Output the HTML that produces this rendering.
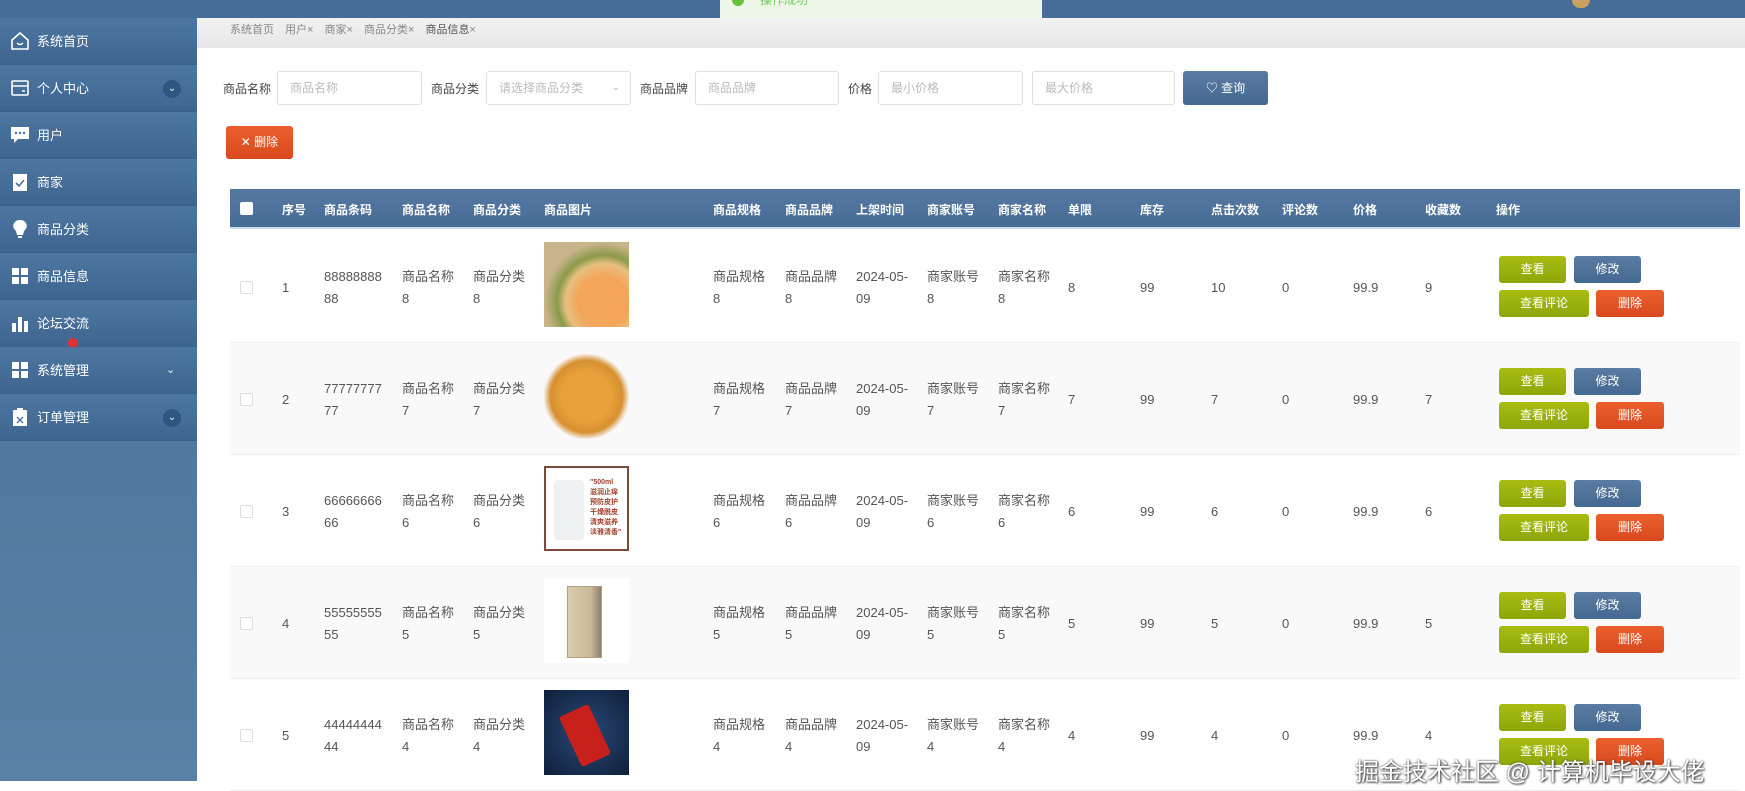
<!DOCTYPE html>
<html><head><meta charset="utf-8"><style>
*{margin:0;padding:0;box-sizing:border-box}
body{width:1745px;height:781px;overflow:hidden;background:#fff;font-family:"Liberation Sans","Noto Sans CJK SC",sans-serif;font-size:13px;color:#555;position:relative}
.a{position:absolute}
#top{left:0;top:0;width:1745px;height:18px;background:#466d97}
#side{left:0;top:18px;width:197px;height:763px;background:linear-gradient(#44709c,#52799f 60%,#5a80a6)}
.mi{position:absolute;left:0;width:197px;height:47px;background:linear-gradient(#4d77a0,#3e6590);color:#fff;font-size:13px;line-height:47px;padding-left:37px;border-bottom:1px solid #3a5f88}
.mi .ic{position:absolute;left:10px;top:13px;width:20px;height:20px}
.mi .ar{position:absolute;left:163px;top:15px;width:18px;height:18px;border-radius:50%;background:#2f5581;color:#cfe;font-size:10px;line-height:18px;text-align:center}
.mi .ar2{position:absolute;left:166px;top:0;color:#dfe;font-size:11px}
#crumb{left:197px;top:18px;width:1548px;height:30px;background:linear-gradient(#f2f2f2,#e6e6e6);font-size:11px;color:#888;line-height:24px;padding-left:33px;word-spacing:8px}
#toast{left:720px;top:0;width:322px;height:18px;background:#edf7e8;color:#7c6;font-size:12px;padding-left:40px;line-height:4px}
.lbl{position:absolute;top:80px;font-size:12px;color:#444}
.inp{position:absolute;top:71px;height:34px;border:1px solid #dcdfe6;border-radius:3px;background:#fff;color:#bbb;font-size:12px;line-height:32px;padding-left:12px}
.btn{position:absolute;color:#fff;text-align:center;border-radius:3px;font-size:12px}
.g{background:linear-gradient(#a8bc12,#8ea60a)}
.b{background:linear-gradient(#5a7ba3,#456892)}
.r{background:linear-gradient(#ec5f2d,#d84a1e)}
#th{left:230px;top:189px;width:1510px;height:40px;background:linear-gradient(#5579a1,#476c96);border-bottom:2px solid #c6dcef;color:#fff;font-weight:bold;font-size:12px}
#th span{position:absolute;top:12px}
.row{position:absolute;left:230px;width:1510px;height:112px;border-bottom:1px solid #eee}
.row span{position:absolute;top:35px;line-height:22px}
.row .s{top:46px}
.row .cb{position:absolute;left:10px;top:50px;width:13px;height:13px;border:1px solid #ddd;border-radius:2px;background:#fff}
.row .img{position:absolute;left:314px;top:11px;width:85px;height:85px}
.row .btn{height:27px;line-height:27px}
</style></head><body>
<div class="a" id="top"></div>
<div class="a" style="left:1572px;top:0;width:18px;height:8px;border-radius:0 0 9px 9px;background:#c9a060"></div>
<div class="a" id="toast"><span style="position:absolute;left:12px;top:-6px;width:12px;height:12px;border-radius:50%;background:#67c23a"></span><span style="position:absolute;left:40px;top:-6px;line-height:12px">操作成功</span></div>
<div class="a" id="side">
<div class="mi" style="top:0"><svg class="ic" viewBox="0 0 20 20"><path d="M2 9L10 2l8 7v9H2z" fill="none" stroke="#fff" stroke-width="1.6"/><path d="M7 12q3 3 6 0" fill="none" stroke="#fff" stroke-width="1.4"/></svg>系统首页</div>
<div class="mi" style="top:47px"><svg class="ic" viewBox="0 0 20 20"><rect x="2" y="3" width="16" height="14" rx="1" fill="none" stroke="#fff" stroke-width="1.6"/><path d="M2 8h16M12 13h3" stroke="#fff" stroke-width="1.6"/></svg>个人中心<span class="ar">⌄</span></div>
<div class="mi" style="top:94px"><svg class="ic" viewBox="0 0 20 20"><path d="M1 2h18v12H8l-4 4v-4H1z" fill="#fff"/><circle cx="6" cy="8" r="1.2" fill="#4a70a0"/><circle cx="10" cy="8" r="1.2" fill="#4a70a0"/><circle cx="14" cy="8" r="1.2" fill="#4a70a0"/></svg>用户</div>
<div class="mi" style="top:141px"><svg class="ic" viewBox="0 0 20 20"><rect x="3" y="2" width="14" height="17" fill="#fff"/><path d="M6 11l3 3 5-6" fill="none" stroke="#4a70a0" stroke-width="1.6"/></svg>商家</div>
<div class="mi" style="top:188px"><svg class="ic" viewBox="0 0 20 20"><path d="M10 1a6 6 0 0 0-4 11l1 4h6l1-4a6 6 0 0 0-4-11zM8 17h4v2H8z" fill="#fff"/></svg>商品分类</div>
<div class="mi" style="top:235px"><svg class="ic" viewBox="0 0 20 20"><path d="M2 2h7v7H2zM11 2h7v7h-7zM2 11h7v7H2zM11 11h7v7h-7z" fill="#fff"/></svg>商品信息</div>
<div class="mi" style="top:282px"><svg class="ic" viewBox="0 0 20 20"><path d="M2 10h4v9H2zM8 4h4v15H8zM14 8h4v11h-4z" fill="#fff"/></svg>论坛交流<span style="position:absolute;left:68px;top:38px;width:10px;height:10px;border-radius:50%;background:#d33"></span></div>
<div class="mi" style="top:329px"><svg class="ic" viewBox="0 0 20 20"><path d="M2 2h7v7H2zM11 2h7v7h-7zM2 11h7v7H2zM11 11h7v7h-7z" fill="#fff"/></svg>系统管理<span class="ar2">⌄</span></div>
<div class="mi" style="top:376px"><svg class="ic" viewBox="0 0 20 20"><rect x="3" y="3" width="14" height="16" fill="#fff"/><rect x="7" y="1" width="6" height="3" fill="#fff"/><path d="M7 10l6 6M13 10l-6 6" stroke="#4a70a0" stroke-width="1.3"/></svg>订单管理<span class="ar">⌄</span></div>
</div>
<div class="a" id="crumb">系统首页 用户× 商家× 商品分类× <b style="color:#555;font-weight:normal">商品信息</b>×</div>

<span class="lbl" style="left:223px">商品名称</span><div class="inp" style="left:277px;width:145px">商品名称</div>
<span class="lbl" style="left:431px">商品分类</span><div class="inp" style="left:486px;width:145px">请选择商品分类<span style="position:absolute;right:10px;font-size:10px">⌄</span></div>
<span class="lbl" style="left:640px">商品品牌</span><div class="inp" style="left:695px;width:144px">商品品牌</div>
<span class="lbl" style="left:848px">价格</span><div class="inp" style="left:878px;width:145px">最小价格</div>
<div class="inp" style="left:1032px;width:143px">最大价格</div>
<div class="btn b" style="left:1183px;top:71px;width:85px;height:34px;line-height:34px">♡ 查询</div>
<div class="btn r" style="left:226px;top:126px;width:67px;height:33px;line-height:33px">✕ 删除</div>

<div class="a" id="th"><span style="left:10px;top:13px;width:13px;height:13px;background:#fff;border-radius:2px"></span>
<span style="left:52px">序号</span><span style="left:94px">商品条码</span><span style="left:172px">商品名称</span><span style="left:243px">商品分类</span><span style="left:314px">商品图片</span><span style="left:483px">商品规格</span><span style="left:555px">商品品牌</span><span style="left:626px">上架时间</span><span style="left:697px">商家账号</span><span style="left:768px">商家名称</span><span style="left:838px">单限</span><span style="left:910px">库存</span><span style="left:981px">点击次数</span><span style="left:1052px">评论数</span><span style="left:1123px">价格</span><span style="left:1195px">收藏数</span><span style="left:1266px">操作</span></div>

<div class="row" style="top:231px;background:#fff"><div class="cb"></div><span class="s" style="left:52px">1</span><span style="left:94px">88888888<br>88</span><span style="left:172px">商品名称<br>8</span><span style="left:243px">商品分类<br>8</span>
<div class="img" style="background:radial-gradient(ellipse at 70% 70%,#f3a55a 30%,#e7c080 45%,#8a9a4a 55%,#c9b38a 70%)"></div>
<span style="left:483px">商品规格<br>8</span><span style="left:555px">商品品牌<br>8</span><span style="left:626px">2024-05-<br>09</span><span style="left:697px">商家账号<br>8</span><span style="left:768px">商家名称<br>8</span><span class="s" style="left:838px">8</span><span class="s" style="left:910px">99</span><span class="s" style="left:981px">10</span><span class="s" style="left:1052px">0</span><span class="s" style="left:1123px">99.9</span><span class="s" style="left:1195px">9</span>
<div class="btn g" style="left:1269px;top:25px;width:67px">查看</div><div class="btn b" style="left:1344px;top:25px;width:67px">修改</div><div class="btn g" style="left:1269px;top:59px;width:90px">查看评论</div><div class="btn r" style="left:1366px;top:59px;width:68px">删除</div></div>

<div class="row" style="top:343px;background:#f9f9f9"><div class="cb"></div><span class="s" style="left:52px">2</span><span style="left:94px">77777777<br>77</span><span style="left:172px">商品名称<br>7</span><span style="left:243px">商品分类<br>7</span>
<div class="img" style="background:radial-gradient(ellipse at 50% 50%,#e8a13a 40%,#d69030 60%,#f9f9f9 72%)"></div>
<span style="left:483px">商品规格<br>7</span><span style="left:555px">商品品牌<br>7</span><span style="left:626px">2024-05-<br>09</span><span style="left:697px">商家账号<br>7</span><span style="left:768px">商家名称<br>7</span><span class="s" style="left:838px">7</span><span class="s" style="left:910px">99</span><span class="s" style="left:981px">7</span><span class="s" style="left:1052px">0</span><span class="s" style="left:1123px">99.9</span><span class="s" style="left:1195px">7</span>
<div class="btn g" style="left:1269px;top:25px;width:67px">查看</div><div class="btn b" style="left:1344px;top:25px;width:67px">修改</div><div class="btn g" style="left:1269px;top:59px;width:90px">查看评论</div><div class="btn r" style="left:1366px;top:59px;width:68px">删除</div></div>

<div class="row" style="top:455px;background:#fff"><div class="cb"></div><span class="s" style="left:52px">3</span><span style="left:94px">66666666<br>66</span><span style="left:172px">商品名称<br>6</span><span style="left:243px">商品分类<br>6</span>
<div class="img" style="border:2px solid #7a4a3a;background:#fff"><div style="position:absolute;left:8px;top:12px;width:30px;height:60px;background:#eef0f2;border-radius:4px"></div><div style="position:absolute;left:44px;top:10px;font-size:7px;color:#a0402a;line-height:10px;font-weight:bold">"500ml<br>滋润止痒<br>预防皮护<br>干燥脱皮<br>清爽滋养<br>淡雅清香"</div></div>
<span style="left:483px">商品规格<br>6</span><span style="left:555px">商品品牌<br>6</span><span style="left:626px">2024-05-<br>09</span><span style="left:697px">商家账号<br>6</span><span style="left:768px">商家名称<br>6</span><span class="s" style="left:838px">6</span><span class="s" style="left:910px">99</span><span class="s" style="left:981px">6</span><span class="s" style="left:1052px">0</span><span class="s" style="left:1123px">99.9</span><span class="s" style="left:1195px">6</span>
<div class="btn g" style="left:1269px;top:25px;width:67px">查看</div><div class="btn b" style="left:1344px;top:25px;width:67px">修改</div><div class="btn g" style="left:1269px;top:59px;width:90px">查看评论</div><div class="btn r" style="left:1366px;top:59px;width:68px">删除</div></div>

<div class="row" style="top:567px;background:#f9f9f9"><div class="cb"></div><span class="s" style="left:52px">4</span><span style="left:94px">55555555<br>55</span><span style="left:172px">商品名称<br>5</span><span style="left:243px">商品分类<br>5</span>
<div class="img" style="background:#fff"><div style="position:absolute;left:23px;top:8px;width:35px;height:72px;background:linear-gradient(90deg,#d8ccb0,#c8b896 70%,#8a8070);border:1px solid #b0a080"></div></div>
<span style="left:483px">商品规格<br>5</span><span style="left:555px">商品品牌<br>5</span><span style="left:626px">2024-05-<br>09</span><span style="left:697px">商家账号<br>5</span><span style="left:768px">商家名称<br>5</span><span class="s" style="left:838px">5</span><span class="s" style="left:910px">99</span><span class="s" style="left:981px">5</span><span class="s" style="left:1052px">0</span><span class="s" style="left:1123px">99.9</span><span class="s" style="left:1195px">5</span>
<div class="btn g" style="left:1269px;top:25px;width:67px">查看</div><div class="btn b" style="left:1344px;top:25px;width:67px">修改</div><div class="btn g" style="left:1269px;top:59px;width:90px">查看评论</div><div class="btn r" style="left:1366px;top:59px;width:68px">删除</div></div>

<div class="row" style="top:679px;background:#fff"><div class="cb"></div><span class="s" style="left:52px">5</span><span style="left:94px">44444444<br>44</span><span style="left:172px">商品名称<br>4</span><span style="left:243px">商品分类<br>4</span>
<div class="img" style="background:radial-gradient(circle at 50% 50%,#2a4a78,#0f1f3a)"><div style="position:absolute;left:25px;top:18px;width:32px;height:55px;background:#c8201a;transform:rotate(-25deg);border-radius:3px"></div></div>
<span style="left:483px">商品规格<br>4</span><span style="left:555px">商品品牌<br>4</span><span style="left:626px">2024-05-<br>09</span><span style="left:697px">商家账号<br>4</span><span style="left:768px">商家名称<br>4</span><span class="s" style="left:838px">4</span><span class="s" style="left:910px">99</span><span class="s" style="left:981px">4</span><span class="s" style="left:1052px">0</span><span class="s" style="left:1123px">99.9</span><span class="s" style="left:1195px">4</span>
<div class="btn g" style="left:1269px;top:25px;width:67px">查看</div><div class="btn b" style="left:1344px;top:25px;width:67px">修改</div><div class="btn g" style="left:1269px;top:59px;width:90px">查看评论</div><div class="btn r" style="left:1366px;top:59px;width:68px">删除</div></div>

<div class="a" style="left:1355px;top:758px;font-size:24px;color:#fff;text-shadow:0 0 2px #444,1px 1px 2px #333;white-space:nowrap;line-height:30px">掘金技术社区 @ 计算机毕设大佬</div>
</body></html>
